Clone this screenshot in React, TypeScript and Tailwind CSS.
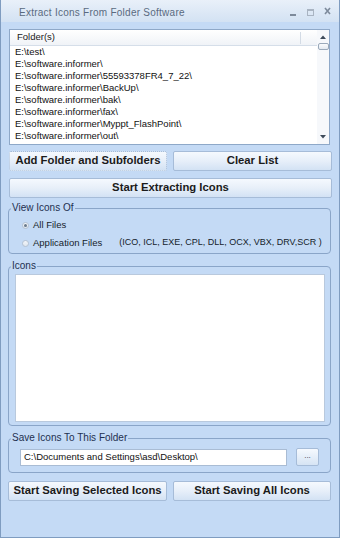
import React from "react";

const folders = [
  "E:\\test\\",
  "E:\\software.informer\\",
  "E:\\software.informer\\55593378FR4_7_22\\",
  "E:\\software.informer\\BackUp\\",
  "E:\\software.informer\\bak\\",
  "E:\\software.informer\\fax\\",
  "E:\\software.informer\\Myppt_FlashPoint\\",
  "E:\\software.informer\\out\\",
];

const btn =
  "h-[20px] border border-[#a6bcd8] rounded-[2px] bg-gradient-to-b from-[#f5f9fe] via-[#e7eff9] to-[#d3e2f4] text-[11.3px] font-bold text-[#1b1b1b] flex items-center justify-center leading-none whitespace-nowrap";

function Radio({ checked }: { checked?: boolean }) {
  return (
    <span className="w-[7px] h-[7px] rounded-full border border-[#b4c2d2] bg-gradient-to-b from-[#f2f5f9] to-[#dfe6ee] flex items-center justify-center shrink-0">
      {checked && <span className="w-[3px] h-[3px] rounded-full bg-[#6b7a8c]" />}
    </span>
  );
}

export default function App() {
  return (
    <div className="w-[340px] h-[538px] bg-[#c4daf5] border-x border-b border-[#7f9cc0] flex flex-col font-['Liberation_Sans',Arial,sans-serif] text-[#111]">
      {/* Title bar */}
      <div className="h-[22px] shrink-0 bg-gradient-to-b from-[#e9f0f9] to-[#d3e2f3] flex items-center pl-[18px] pr-[7px] pt-[2px]">
        <span className="text-[10px] text-[#5a6a80] tracking-[0.25px]">
          Extract Icons From Folder Software
        </span>
        <svg className="ml-auto" width="44" height="14" viewBox="0 0 44 14">
          <rect x="2" y="9" width="6" height="2" fill="#7d8a9b" />
          <rect x="19.5" y="4.5" width="6" height="6" fill="none" stroke="#a9b4c2" strokeWidth="1" />
          <rect x="19.5" y="4.5" width="6" height="1.5" fill="#a9b4c2" />
          <path d="M37 3 L42 9 M42 3 L37 9" stroke="#7d8a9b" strokeWidth="1.6" />
        </svg>
      </div>

      <div className="flex flex-col px-[7px]">
        {/* Folder list */}
        <div className="mt-[7px] ml-[1px] mr-[2px] h-[116px] border border-[#8ea8c8] bg-white flex">
          <div className="flex-1 flex flex-col min-w-0">
            <div className="h-[16px] shrink-0 border-b border-[#d5dee9] bg-gradient-to-b from-white to-[#f0f3f7] flex items-center">
              <span className="pl-[7px] text-[9.5px] text-[#1a1a1a]">Folder(s)</span>
              <span className="ml-auto mr-[16px] w-px h-[12px] bg-[#d3dbe5]" />
            </div>
            <div className="flex flex-col pl-[5px]">
              {folders.map((f) => (
                <div key={f} className="h-[12px] leading-[12px] text-[9.5px] text-[#111] whitespace-nowrap">
                  {f}
                </div>
              ))}
            </div>
          </div>
          <div className="w-[12px] bg-[#f6f8fb] flex flex-col items-center">
            <svg className="mt-[4px]" width="8" height="6" viewBox="0 0 8 6">
              <path d="M1 5 L4 1.5 L7 5 Z" fill="#3d4a5a" />
            </svg>
            <div className="mt-[3px] w-[11px] h-[7px] border border-[#9aa9ba] rounded-[2px] bg-gradient-to-b from-[#fbfcfd] to-[#e3e9f0]" />
            <div className="flex-1" />
            <svg className="mb-[4px]" width="8" height="6" viewBox="0 0 8 6">
              <path d="M1 1 L4 4.5 L7 1 Z" fill="#3d4a5a" />
            </svg>
          </div>
        </div>

        {/* Button row */}
        <div className="mt-[6px] flex gap-[6px]">
          <button className={`${btn} ml-[1px] w-[158px] border-dotted border-[#4f4f3f]`}>
            Add Folder and Subfolders
          </button>
          <button className={`${btn} flex-1`}>Clear List</button>
        </div>
        <button className={`${btn} mt-[7px] ml-[1px]`}>Start Extracting Icons</button>

        {/* View Icons Of */}
        <fieldset className="mt-[4px] mr-[1px] border border-[#8aa5c8] rounded-[4px] p-0 m-0 min-w-0">
          <legend className="ml-[2px] px-[1px] text-[10px] leading-[12px] text-[#1e3050]">View Icons Of</legend>
          <div className="flex flex-col pl-[13px] pt-[2px] pb-[1px]">
            <div className="h-[18px] flex items-center gap-[4px]">
              <Radio checked />
              <span className="text-[9.5px] text-[#151d2a] whitespace-nowrap">All Files</span>
            </div>
            <div className="h-[18px] flex items-center gap-[4px] whitespace-nowrap">
              <Radio />
              <span className="text-[9.5px] text-[#151d2a] shrink-0">Application Files</span>
              <span className="ml-[13px] text-[9px] text-[#151d2a] shrink-0">
                (ICO, ICL, EXE, CPL, DLL, OCX, VBX, DRV,SCR )
              </span>
            </div>
          </div>
        </fieldset>

        {/* Icons */}
        <fieldset className="mt-[6px] mr-[1px] border border-[#8aa5c8] rounded-[4px] p-0 m-0 min-w-0">
          <legend className="ml-[2px] px-[1px] text-[10px] leading-[12px] text-[#1e3050]">Icons</legend>
          <div className="pl-[6px] pr-[5px] pt-[2px] pb-[3px]">
            <div className="h-[148px] bg-white border border-[#b9c9dd]" />
          </div>
        </fieldset>

        {/* Save folder */}
        <fieldset className="mt-[6px] mr-[1px] border border-[#8aa5c8] rounded-[4px] p-0 m-0 min-w-0">
          <legend className="ml-[2px] px-[1px] text-[10px] leading-[12px] text-[#1e3050]">Save Icons To This Folder</legend>
          <div className="flex items-center pl-[11px] pt-[4px] pb-[6px] gap-[9px]">
            <div className="w-[267px] h-[17px] bg-white border border-[#a9bcd4] flex items-center pl-[3px] text-[9.5px] text-[#111] whitespace-nowrap">
              C:\Documents and Settings\asd\Desktop\
            </div>
            <button className="w-[23px] h-[18px] border border-[#a6bcd8] rounded-[2px] bg-gradient-to-b from-[#f5f9fe] to-[#d6e4f4] text-[8px] text-[#333] flex items-center justify-center leading-none pb-[2px]">
              ...
            </button>
          </div>
        </fieldset>

        {/* Bottom buttons */}
        <div className="mt-[8px] mr-[1px] flex gap-[6px]">
          <button className={`${btn} w-[159px]`}>Start Saving Selected Icons</button>
          <button className={`${btn} flex-1`}>Start Saving All Icons</button>
        </div>
      </div>
    </div>
  );
}
